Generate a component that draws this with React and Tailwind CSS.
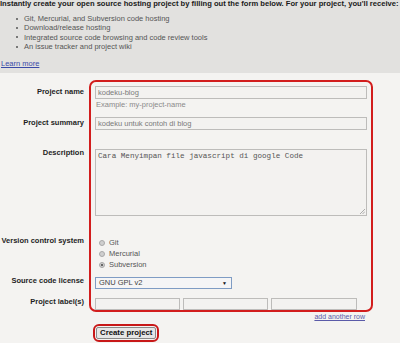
export default function App() {
  const bullets = [
    "Git, Mercurial, and Subversion code hosting",
    "Download/release hosting",
    "Integrated source code browsing and code review tools",
    "An issue tracker and project wiki",
  ];
  const radios = [
    { label: "Git", on: false },
    { label: "Mercurial", on: false },
    { label: "Subversion", on: true },
  ];
  const labelCls =
    "col-start-1 text-right pr-[5px] font-bold text-[#1e1e1e] text-[7.5px] leading-[10px] whitespace-nowrap";
  const inputCls =
    "border border-[#bdbcba] bg-[#f3f2f0] text-[#7a7a7a] text-[7.5px] leading-[11px] px-[2px] whitespace-nowrap overflow-hidden";
  return (
    <div className="w-[400px] h-[343px] overflow-hidden bg-[#f4f3f1] font-['Liberation_Sans',Arial,sans-serif] text-[7.5px]">
      <div className="bg-[#e2e1df] h-[73px]">
        <p className="whitespace-nowrap font-bold text-[#1a1a1a] text-[7.6px] leading-[8px] pt-[0px]">
          Instantly create your open source hosting project by filling out the form below. For your project, you'll receive:
        </p>
        <ul className="mt-[6px] pl-[16px] text-[#555] leading-[9.3px]">
          {bullets.map((b) => (
            <li key={b} className="flex items-center whitespace-nowrap">
              <span className="w-[2px] h-[2px] rounded-full bg-[#555] mr-[6px]" />
              {b}
            </li>
          ))}
        </ul>
        <a className="block ml-[1px] mt-[9px] underline text-[#3a4aa8] leading-[8px] w-fit">Learn more</a>
      </div>

      <div className="pt-[7px] grid grid-cols-[89px_284px] grid-rows-[33px_30px_82px_47px_21px_19px]">
        <div className="col-start-2 row-start-1 row-end-7 border-2 border-[#d21d1d] rounded-[7px]" />

        <div className={`${labelCls} row-start-1 pt-[7px]`}>Project name</div>
        <div className="col-start-2 row-start-1 pl-[6px] pt-[6px]">
          <div className={`${inputCls} w-[272px] h-[13px]`}>kodeku-blog</div>
          <div className="mt-[1px] pl-[1px] text-[#8a8a8a] leading-[9px]">Example: my-project-name</div>
        </div>

        <div className={`${labelCls} row-start-2 pt-[5px]`}>Project summary</div>
        <div className="col-start-2 row-start-2 pl-[6px] pt-[4px]">
          <div className={`${inputCls} w-[272px] h-[13px]`}>kodeku untuk contoh di blog</div>
        </div>

        <div className={`${labelCls} row-start-3 pt-[5px]`}>Description</div>
        <div className="col-start-2 row-start-3 pl-[6px] pt-[6px]">
          <div className="relative w-[272px] h-[67px] border border-[#bdbcba] bg-[#f3f2f0] text-[#555] font-['Liberation_Mono',monospace] text-[7.6px] leading-[10px] px-[2px] pt-[1px] whitespace-nowrap">
            Cara Menyimpan file javascript di google Code
            <svg className="absolute right-[1px] bottom-[1px]" width="5" height="5" viewBox="0 0 5 5">
              <path d="M5 0 L0 5 M5 2.5 L2.5 5" stroke="#999" strokeWidth="0.8" />
            </svg>
          </div>
        </div>

        <div className={`${labelCls} row-start-4 pt-[11px]`}>Version control system</div>
        <div className="col-start-2 row-start-4 pl-[10px] pt-[12px] text-[#555]">
          {radios.map((r) => (
            <div key={r.label} className="flex items-center h-[11px]">
              <span className="w-[6px] h-[6px] rounded-full bg-[#cfcfcf] border border-[#a9a9a9] flex items-center justify-center">
                {r.on && <span className="w-[2px] h-[2px] rounded-full bg-[#444]" />}
              </span>
              <span className="ml-[4px] leading-[10px]">{r.label}</span>
            </div>
          ))}
        </div>

        <div className={`${labelCls} row-start-5 pt-[4px]`}>Source code license</div>
        <div className="col-start-2 row-start-5 pl-[6px] pt-[5px]">
          <div className="w-[137px] h-[12px] border border-[#7f9cc4] bg-[#f5f5f6] flex items-center justify-between pl-[3px] pr-[4px] text-[#444] leading-[10px]">
            <span>GNU GPL v2</span>
            <span className="text-[5px] text-[#111]">▼</span>
          </div>
        </div>

        <div className={`${labelCls} row-start-6 pt-[4px]`}>Project label(s)</div>
        <div className="col-start-2 row-start-6 pl-[6px] pt-[5px] flex gap-[3px]">
          <div className={`${inputCls} w-[85px] h-[12px]`} />
          <div className={`${inputCls} w-[85px] h-[12px]`} />
          <div className={`${inputCls} w-[86px] h-[12px]`} />
        </div>
      </div>

      <div className="w-[365px] flex justify-end mt-[1px]">
        <a className="underline text-[#5a5aa8] text-[7px] leading-[8px]">add another row</a>
      </div>

      <div className="ml-[93px] mt-[3px] w-fit border-2 border-[#c81818] rounded-[6px] p-[1px]">
        <button className="h-[12px] px-[3px] border border-[#8a8a8a] bg-[#e6e6e6] rounded-[2px] font-bold text-[7.8px] leading-[10px] text-[#111] font-['Liberation_Sans',Arial,sans-serif]">
          Create project
        </button>
      </div>
    </div>
  );
}
